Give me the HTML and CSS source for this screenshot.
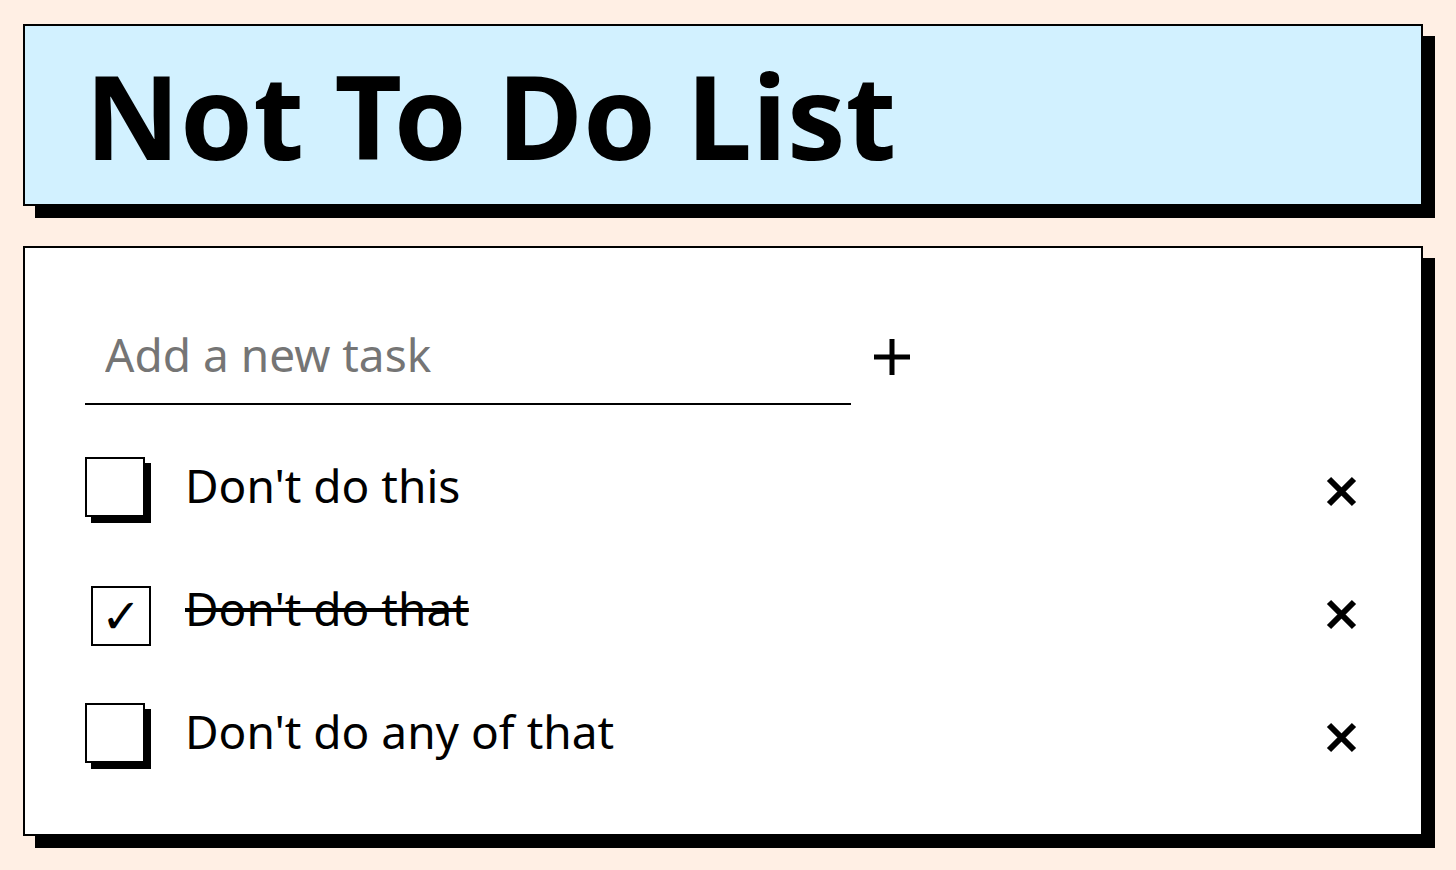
FILE: index.html
```html
<!DOCTYPE html>
<html lang="en">
<head>
<meta charset="utf-8">
<meta name="viewport" content="width=device-width, initial-scale=1">
<title>Not To Do List</title>
<link rel="stylesheet" href="styles.css">
</head>
<body>
<main class="page">
  <header class="card card-title">
    <h1 class="title">Not To Do List</h1>
  </header>
  <section class="card card-tasks">
    <form class="add-form">
      <input class="add-input" type="text" placeholder="Add a new task" aria-label="Add a new task">
      <button class="icon-button" type="button" aria-label="Add">
        <svg class="icon" viewBox="0 0 40 40"><path d="M21 2v36M3 20h36"/></svg>
      </button>
    </form>
    <ul class="tasks">
      <li class="task">
        <input class="check" type="checkbox" id="task-1">
        <label class="task-label" for="task-1">Don't do this</label>
        <button class="icon-button" type="button" aria-label="Delete Don't do this">
          <svg class="icon icon-delete" viewBox="0 0 40 40"><path d="M8 12l25 25M33 12l-25 25"/></svg>
        </button>
      </li>
      <li class="task">
        <input class="check" type="checkbox" id="task-2" checked>
        <label class="task-label" for="task-2">Don't do that</label>
        <button class="icon-button" type="button" aria-label="Delete Don't do that">
          <svg class="icon icon-delete" viewBox="0 0 40 40"><path d="M8 12l25 25M33 12l-25 25"/></svg>
        </button>
      </li>
      <li class="task">
        <input class="check" type="checkbox" id="task-3">
        <label class="task-label" for="task-3">Don't do any of that</label>
        <button class="icon-button" type="button" aria-label="Delete Don't do any of that">
          <svg class="icon icon-delete" viewBox="0 0 40 40"><path d="M8 12l25 25M33 12l-25 25"/></svg>
        </button>
      </li>
    </ul>
  </section>
</main>
</body>
</html>
```
FILE: styles.css
```css
* { box-sizing: border-box; }

body {
  margin: 0;
  background: #ffefe4;
  color: #000;
  font-family: "Noto Sans", "Open Sans", sans-serif;
  font-size: 46px;
  line-height: 56px;
}

.page {
  display: flex;
  flex-direction: column;
  gap: 40px;
  padding: 24px 33px 24px 23px;
}

.card {
  border: 2px solid #000;
  background: #fff;
  box-shadow: 12px 12px 0 #000;
  padding: 60px;
}

.card-title {
  background: #d2f1ff;
  padding: 20px 60px;
}

.title {
  margin: 0;
  font-size: 117px;
  font-weight: 700;
  line-height: 138px;
}

.card-tasks { padding: 60px 60px 71px; }

.add-form {
  display: flex;
  align-items: center;
  gap: 20px;
}

.add-input {
  width: 60%;
  height: 97px;
  padding: 0 20px 4px;
  border: 0;
  border-bottom: 2px solid #000;
  background: transparent;
  color: inherit;
  font: inherit;
  outline: none;
}

.add-input::placeholder { color: #757575; opacity: 1; }

.icon-button {
  display: flex;
  padding: 0;
  border: 0;
  background: none;
  cursor: pointer;
}

.icon {
  width: 40px;
  height: 40px;
  fill: none;
  stroke: #000;
  stroke-width: 5;
}

.icon-delete { stroke-width: 6; }

.tasks {
  display: flex;
  flex-direction: column;
  gap: 63px;
  margin: 52px 0 0;
  padding: 0;
  list-style: none;
}

.task {
  display: flex;
  align-items: center;
}

.check {
  appearance: none;
  display: grid;
  place-items: center;
  flex: none;
  width: 60px;
  height: 60px;
  margin: 0;
  border: 2px solid #000;
  background: #fff;
  box-shadow: 6px 6px 0 #000;
}

.check:checked {
  transform: translate(6px, 6px);
  box-shadow: none;
}

.check:checked::before {
  content: "✓";
  font-family: "DejaVu Sans", sans-serif;
  font-size: 48px;
  line-height: 56px;
}

.task-label {
  flex: 1;
  margin-left: 40px;
  padding-bottom: 4px;
}

.check:checked + .task-label {
  text-decoration: line-through;
  text-decoration-thickness: 4px;
}
```
